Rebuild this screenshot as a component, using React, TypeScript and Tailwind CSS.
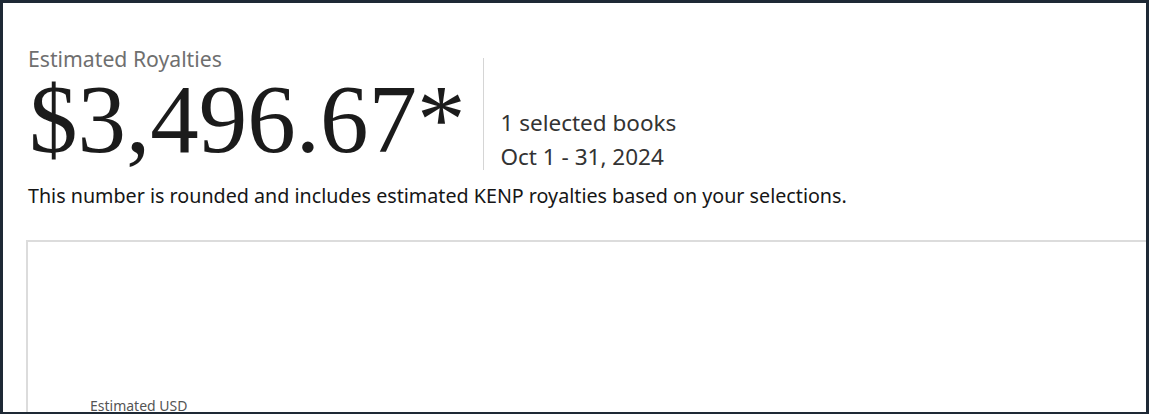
export default function App() {
  return (
    <div className="h-[414px] w-[1149px] overflow-hidden border-t-[3px] border-b-[2px] border-l-[3px] border-r-[3px] border-[#1e2935] bg-white">
      <div className="pl-[25px] pt-[43px]" style={{ fontFamily: '"Noto Sans", "Open Sans", sans-serif' }}>
        <div className="text-[21.2px] leading-[26px] text-[#6f6f6f]">Estimated Royalties</div>
        <div className="mt-[8px] flex items-start">
          <div
            className="pl-[1px] text-[97px] leading-[80px] text-[#1b1b1b]"
            style={{ fontFamily: '"Liberation Serif", serif' }}
          >
            $3,496.67*
          </div>
          <div className="ml-[17px] mt-[-22px] h-[112px] border-l border-[#d5d5d5] pl-[17px] pt-[48px] text-[22.5px] leading-[34px] text-[#333]">
            <div>1 selected books</div>
            <div>Oct 1 - 31, 2024</div>
          </div>
        </div>
        <div className="mt-[13px] text-[19.7px] leading-[26px] text-[#161616]">
          This number is rounded and includes estimated KENP royalties based on your selections.
        </div>
        <div className="ml-[-2px] mt-[31px] h-[200px] border-t-2 border-l-2 border-[#dcdcdc] pl-[62px] pt-[156px]">
          <div className="text-[14px] leading-[16px] text-[#555]">Estimated USD</div>
        </div>
      </div>
    </div>
  )
}
